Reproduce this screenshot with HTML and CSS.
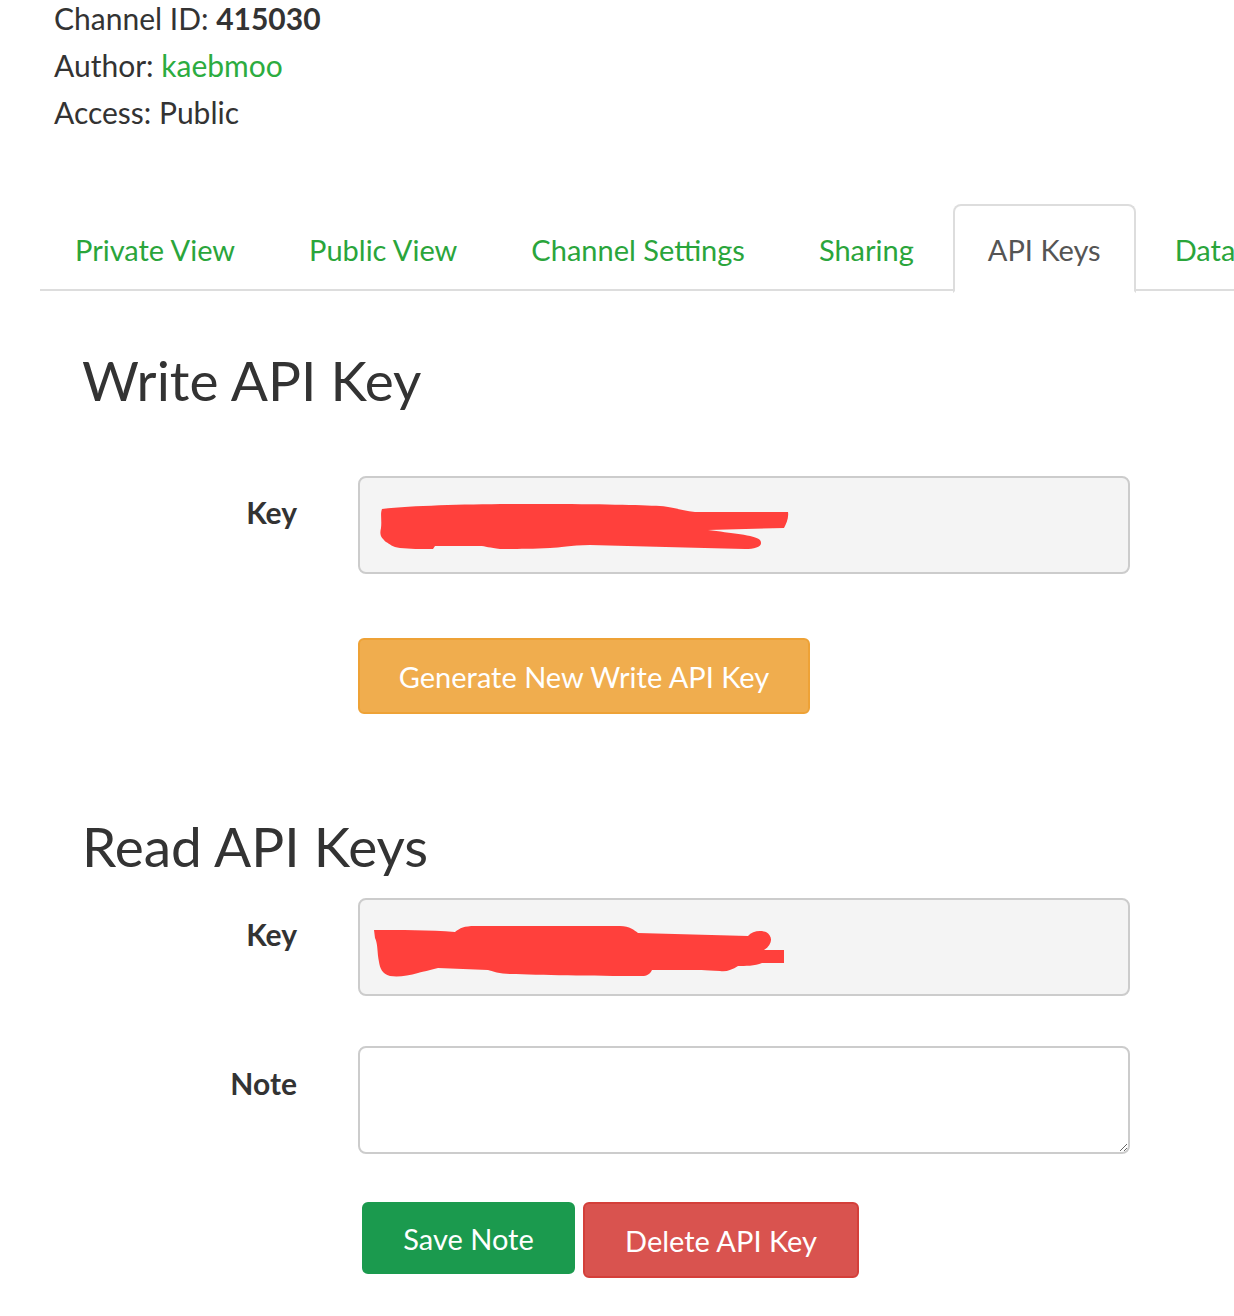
FILE: index.html
```html
<!DOCTYPE html>
<html>
<head>
<meta charset="utf-8">
<link rel="stylesheet" href="styles.css">
</head>
<body>
<div class="page">
  <div class="info">
    <div>Channel ID: <strong>415030</strong></div>
    <div>Author: <a class="link" href="#">kaebmoo</a></div>
    <div>Access: Public</div>
  </div>

  <ul class="tabs">
    <li><a href="#">Private View</a></li>
    <li><a href="#">Public View</a></li>
    <li><a href="#">Channel Settings</a></li>
    <li><a href="#">Sharing</a></li>
    <li class="active"><a href="#">API Keys</a></li>
    <li><a href="#">Data</a></li>
  </ul>

  <section class="panel">
    <h2 class="title">Write API Key</h2>
    <div class="row">
      <label class="label">Key</label>
      <div class="field readonly">
        <svg class="scribble" width="430" height="80" viewBox="0 0 430 80">
          <path fill="#ff403c" d="M22 31 C60 27 120 26 180 26 C240 26 280 27 300 28 C315 29 322 33 335 34 L428 34 C429 40 426 46 424 50 L348 52 C370 55 395 57 400 62 C404 68 396 71 385 71 C330 70 280 68 230 67 C210 67 200 70 190 70 C170 71 150 71 140 71 C130 70 125 68 120 68 L75 68 L73 71 C60 71 50 71 40 70 C32 69 30 66 26 64 C22 60 19 58 21 50 C22 42 20 36 22 31 Z"/>
        </svg>
      </div>
    </div>
    <div class="row actions-row">
      <span></span>
      <div><button class="btn btn-warning">Generate New Write API Key</button></div>
    </div>

    <h2 class="title second">Read API Keys</h2>
    <div class="row">
      <label class="label">Key</label>
      <div class="field readonly">
        <svg class="scribble" width="430" height="80" viewBox="0 0 430 80">
          <path fill="#ff403c" d="M14 30 C40 30 70 30 95 32 C100 28 104 26 115 26 L260 26 C270 26 274 30 278 33 L388 36 C392 31 400 30 406 32 C413 36 413 44 404 50 L424 50 L424 63 L402 63 C395 66 385 66 378 66 C372 70 366 72 360 71 C345 70 335 70 330 70 L292 70 C290 74 287 76 282 76 C230 76 180 75 150 74 C140 74 132 71 128 70 L78 68 C70 70 62 72 58 73 C48 76 38 77 30 76 C22 74 20 68 19 62 C17 52 18 44 15 38 Z"/>
        </svg>
      </div>
    </div>
    <div class="row note-row">
      <label class="label">Note</label>
      <textarea class="field note"></textarea>
    </div>
    <div class="row buttons-row">
      <span></span>
      <div class="btn-group">
        <button class="btn btn-success">Save Note</button>
        <button class="btn btn-danger">Delete API Key</button>
      </div>
    </div>
  </section>
</div>
</body>
</html>
```

FILE: styles.css
```css
* { box-sizing: border-box; }
html, body { margin: 0; padding: 0; background: #fff; }
body {
  font-family: Lato, "Liberation Sans", sans-serif;
  color: #333;
  overflow: hidden;
  width: 1234px;
  height: 1316px;
}
.page { width: 1234px; overflow: hidden; }

.info {
  padding: 0 0 0 54px;
  font-size: 30px;
  line-height: 47px;
  margin-top: -5px;
}
.info strong { font-weight: 700; }
.link { color: #2cac40; text-decoration: none; }

.tabs {
  list-style: none;
  margin: 68px 0 0 40px;
  padding: 0;
  display: flex;
  flex-wrap: nowrap;
  white-space: nowrap;
  border-bottom: 2px solid #ddd;
  height: 87px;
}
.tabs li { margin-right: 4px; margin-bottom: -2px; }
.tabs a {
  display: block;
  height: 87px;
  padding: 0 33px;
  line-height: 87px;
  font-size: 29px;
  color: #2aa53b;
  text-decoration: none;
  border: 2px solid transparent;
  border-radius: 8px 8px 0 0;
}
.tabs .active a {
  color: #555;
  background: #fff;
  border-color: #ddd;
  border-bottom-color: #fff;
  height: 89px;
}

.panel { padding: 0 104px 0 82px; }
.title {
  font-family: Lato, "Liberation Sans", sans-serif;
  font-weight: 400;
  font-size: 55px;
  line-height: 70px;
  margin: 54px 0 0 0;
  color: #333;
}
.title.second { margin-top: 97px; }

.row {
  display: grid;
  grid-template-columns: 215px 772px;
  column-gap: 61px;
  align-items: start;
  margin-top: 61px;
}
.label {
  text-align: right;
  font-weight: 700;
  font-size: 30px;
  padding-top: 18px;
}
.field {
  height: 98px;
  border: 2px solid #ccc;
  border-radius: 8px;
  background: #f4f4f4;
  position: relative;
}
.scribble { position: absolute; left: 0; top: 0; }

.actions-row { margin-top: 64px; }
.second + .row { margin-top: 17px; }
.note-row { margin-top: 50px; }
.note {
  display: block;
  width: 772px;
  height: 108px;
  background: #fff;
  resize: vertical;
  font: inherit;
}
.note-row .label { padding-top: 19px; }

.btn {
  font-family: Lato, "Liberation Sans", sans-serif;
  font-size: 29px;
  color: #fff;
  border-radius: 6px;
  border: 2px solid transparent;
  cursor: pointer;
  padding: 0;
}
.btn-warning {
  background: #f0ad4e;
  border-color: #eea236;
  width: 452px;
  height: 76px;
}
.buttons-row { margin-top: 48px; }
.btn-group { display: flex; gap: 8px; padding-left: 4px; }
.btn-success {
  background: #1b9a4e;
  border-color: #1b9a4e;
  width: 213px;
  height: 72px;
}
.btn-danger {
  background: #d9534f;
  border-color: #d43f3a;
  width: 276px;
  height: 76px;
}
```
